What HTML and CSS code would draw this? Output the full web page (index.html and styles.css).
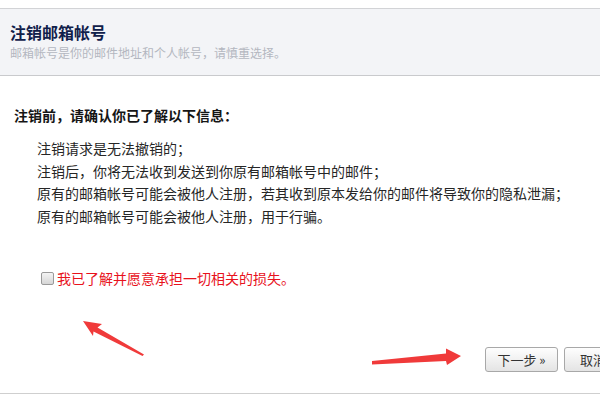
FILE: index.html
```html
<!DOCTYPE html>
<html lang="zh-CN">
<head>
<meta charset="utf-8">
<title>注销邮箱帐号</title>
<link rel="stylesheet" href="styles.css">
</head>
<body>
<div class="page">
  <div class="header">
    <h1 class="title">注销邮箱帐号</h1>
    <p class="subtitle">邮箱帐号是你的邮件地址和个人帐号，请慎重选择。</p>
  </div>
  <div class="content">
    <h2 class="heading">注销前，请确认你已了解以下信息：</h2>
    <ul class="list">
      <li>注销请求是无法撤销的；</li>
      <li>注销后，你将无法收到发送到你原有邮箱帐号中的邮件；</li>
      <li>原有的邮箱帐号可能会被他人注册，若其收到原本发给你的邮件将导致你的隐私泄漏；</li>
      <li>原有的邮箱帐号可能会被他人注册，用于行骗。</li>
    </ul>
    <label class="agree"><input type="checkbox" class="check"><span>我已了解并愿意承担一切相关的损失。</span></label>
  </div>
  <div class="footer">
    <button class="btn" type="button">下一步 »</button>
    <button class="btn btn-cancel" type="button">取消</button>
  </div>
</div>
<svg class="annot" width="600" height="402" viewBox="0 0 600 402" xmlns="http://www.w3.org/2000/svg">
  <polygon fill="#f03a3a" points="83,321 102,324 97.5,327.5 144,354.5 142.5,356 93.5,331.5 93,336"/>
  <polygon fill="#f03a3a" points="461,356 446,348.5 446,353.5 372,361 372,364.5 446,361 447,365"/>
</svg>
</body>
</html>
```

FILE: styles.css
```css
html, body {
  margin: 0;
  padding: 0;
  overflow: hidden;
  background: #fff;
}
body {
  font-family: "Noto Sans CJK SC", "Noto Sans", sans-serif;
  color: #222;
  position: relative;
  width: 600px;
  height: 402px;
}
.page {
  width: 650px;
  padding-top: 8px;
}
.header {
  border-top: 1px solid #d2d3d6;
  border-bottom: 1px solid #c9cacd;
  background: #f3f4f7;
  height: 66px;
  box-sizing: content-box;
  padding: 0 0 0 10px;
}
.title {
  margin: 0;
  padding-top: 12px;
  font-size: 16px;
  line-height: 22px;
  font-weight: bold;
  color: #10204a;
}
.subtitle {
  margin: 1px 0 0;
  font-size: 12px;
  line-height: 18px;
  color: #b3b7c0;
}
.content {
  padding-left: 14px;
}
.heading {
  margin: 29px 0 0;
  font-size: 14px;
  line-height: 20px;
  font-weight: bold;
  color: #151515;
}
.list {
  list-style: none;
  margin: 12px 0 0;
  padding: 0 0 0 23px;
  font-size: 14px;
  line-height: 22.5px;
  color: #262626;
}
.agree {
  display: flex;
  align-items: center;
  margin-top: 41px;
  padding-left: 27px;
  height: 20px;
  font-size: 14px;
  color: #e8121c;
}
.check {
  appearance: none;
  -webkit-appearance: none;
  width: 13px;
  height: 13px;
  margin: 0 3px 0 0;
  border: 1px solid #9a9a9a;
  border-radius: 2px;
  background: linear-gradient(#f4f4f4, #d6d6d6);
  box-sizing: border-box;
}
.footer {
  display: flex;
  justify-content: flex-end;
  gap: 6px;
  margin-top: 59px;
  padding: 0 28px 21px 0;
  border-bottom: 1px solid #cfcfcf;
}
.btn {
  height: 25px;
  width: 73px;
  padding: 0;
  border: 1px solid #a8a8a8;
  border-radius: 3px;
  background: linear-gradient(#fefefe, #e4e4e4);
  font-family: "Noto Sans CJK SC", "Noto Sans", sans-serif;
  font-size: 13px;
  color: #333;
  box-sizing: border-box;
}
.btn-cancel {
  width: 58px;
}
.annot {
  position: absolute;
  top: 0;
  left: 0;
  pointer-events: none;
}
```
